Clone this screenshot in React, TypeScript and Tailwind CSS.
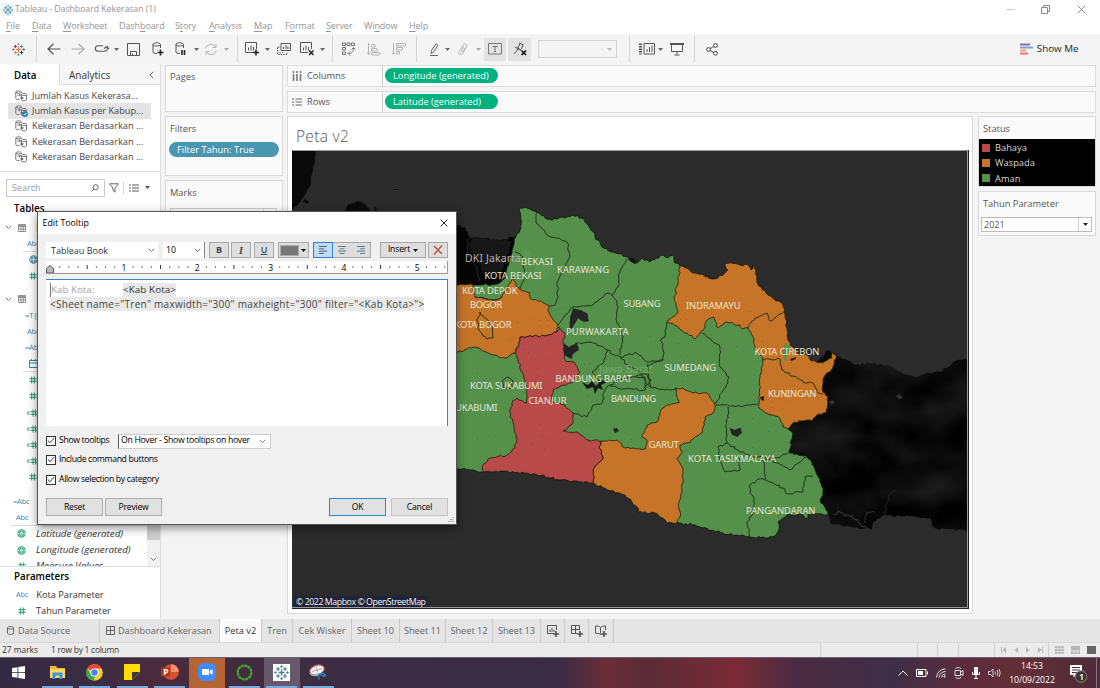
import React from "react";

type Pt = [number, number];

/* ---------- map geometry ---------- */

function parse(s: string): Pt[] {
  return s.split(" ").map((p) => p.split(",").map(Number) as Pt);
}

function noise(a: number, b: number, k: number) {
  const v = Math.sin(a * 12.9898 + b * 78.233 + k * 37.719) * 43758.5453;
  return v - Math.floor(v) - 0.5;
}

/* Adds small coastline-like irregularities; the result is the same in both directions. */
function rough(s: string, close = false, amp = 2.1) {
  const pts = parse(s);
  if (close) pts.push(pts[0]);
  const out: string[] = [`M${pts[0][0]} ${pts[0][1]}`];
  for (let i = 1; i < pts.length; i++) {
    const a = pts[i - 1];
    const b = pts[i];
    const flip = a[0] > b[0] || (a[0] === b[0] && a[1] > b[1]);
    const [p, q] = flip ? [b, a] : [a, b];
    const len = Math.hypot(q[0] - p[0], q[1] - p[1]);
    const n = Math.max(1, Math.round(len / 2.6));
    const seg: string[] = [];
    for (let k = 1; k < n; k++) {
      const t = k / n;
      const x = p[0] + (q[0] - p[0]) * t + noise(p[0], q[1], k) * amp;
      const y = p[1] + (q[1] - p[1]) * t + noise(q[0], p[1], k + 9) * amp;
      seg.push(`L${x.toFixed(1)} ${y.toFixed(1)}`);
    }
    if (flip) seg.reverse();
    out.push(...seg, `L${b[0]} ${b[1]}`);
  }
  return out.join("") + (close ? "Z" : "");
}

const PROVINCE =
  "450,285 474,285 475,285 497,284 506,277 509,262 512,252 515,238 520,230 521,220 519,210 525,207 537,212 547,219 557,219 572,215 582,218 590,228 602,247 613,252 628,257 632,262 637,263 642,258 650,262 663,255 668,258 673,255 675,263 680,266 695,273 712,279 718,278 728,270 725,263 740,265 748,265 751,270 753,265 756,272 757,282 768,295 783,304 785,310 787,330 788,340 797,353 807,355 812,361 822,363 832,358 832,352 836,355 833,367 824,377 823,392 828,397 826,413 817,415 812,421 802,421 793,423 788,429 793,433 789,453 807,456 812,462 816,472 820,482 823,492 820,500 828,512 829,516 817,514 808,514 807,519 800,514 787,515 778,522 779,530 775,536 768,538 750,537 723,533 703,528 695,525 678,523 667,523 663,518 655,513 638,512 637,507 625,495 603,488 593,483 560,480 535,474 500,471 482,472 450,467";

const BOGOR =
  "450,285 473,285 475,297 483,298 495,300 502,297 508,287 512,280 514,277 517,287 522,291 530,293 530,298 548,305 550,315 558,325 557,332 545,336 520,337 518,347 515,353 505,358 493,355 475,347 457,352 450,353";

const CIANJUR =
  "520,337 545,336 557,332 559,327 565,333 563,345 565,360 575,363 580,373 571,383 553,390 552,402 565,405 573,413 573,423 563,431 577,432 588,440 602,441 599,447 603,458 593,470 593,483 560,480 535,474 500,471 484,472 482,467 490,458 507,455 515,448 516,437 513,422 510,417 512,403 517,398 527,403 527,390 525,380 518,360 515,353 518,347";

const GARUT =
  "602,441 617,440 625,448 645,449 647,440 642,437 647,425 657,422 663,408 667,405 679,403 675,388 683,388 693,393 707,393 715,405 713,413 705,417 703,432 687,443 680,445 682,452 677,459 683,468 682,492 679,502 680,517 677,523 667,523 663,518 655,513 638,512 637,507 625,495 603,488 593,483 593,470 603,458 599,447";

const INDRAMAYU =
  "680,266 695,273 712,279 718,278 728,270 725,263 740,265 748,265 751,270 753,265 756,272 757,282 768,295 783,304 785,310 787,330 788,340 797,353 807,355 812,361 822,363 832,358 832,352 836,355 833,367 824,377 823,392 828,397 826,413 817,415 812,421 802,421 793,423 788,429 783,427 780,418 770,415 759,408 760,377 763,358 755,350 753,337 748,328 742,329 740,325 727,322 718,328 714,317 707,320 703,330 695,339 677,326 667,322 678,312 674,297 678,283";

const EAST_LAND =
  "828,350 837,356 847,360 855,365 872,363 890,366 903,374 915,377 926,373 940,372 953,362 969,358 969,531 945,529 938,529 933,527 930,518 905,516 885,515 873,522 872,530 850,527 830,523 828,512 780,500 780,400";

const BORDERS = [
  "537,212 536,223 547,235 567,242 570,257 565,268 557,282 558,297 555,305 549,306",
  "515,252 523,257 525,277 520,290",
  "627,259 620,272 618,287 612,295 617,303 617,323 623,337 620,355",
  "558,325 573,307 593,305 608,293 612,295",
  "575,343 593,343 607,350 620,357 637,353 647,362 663,360",
  "667,322 665,337 661,339 664,353 663,360 647,365 650,387 670,390 676,390",
  "702,333 720,347 720,367 729,377 728,383 718,400 716,404",
  "716,405 740,406 758,404",
  "728,407 729,413 726,427 727,443 740,452 753,457 777,458 788,453",
  "727,443 718,447 720,460 725,472 740,470 740,458",
  "763,460 765,480 783,488 787,494 803,492 805,477 813,476",
  "765,459 778,463 790,470 797,464 807,457",
  "765,480 758,479 750,485 750,492 754,498 753,513 747,522 750,537",
  "762,359 780,359 782,370 797,378 807,383 813,383 818,393 823,394",
  "748,328 755,318 767,313 770,321 785,311",
  "573,413 587,417 593,405 602,403 605,390 610,385 617,380 630,378 645,377 645,390 623,389 610,386",
  "607,350 604,362 592,372 600,382",
  "620,357 629,366 640,372 650,387",
  "480,312 485,318 492,326 493,338 487,339 479,330 477,320 480,312",
  "502,381 508,377 513,381 510,389 503,388 502,381",
  "475,297 483,298 495,300 502,297",
  "636,376 646,374 651,380 644,388",
];

const LABELS: [string, number, number, number][] = [
  ["BEKASI", 521, 264.5, 32],
  ["KOTA BEKASI", 484.5, 279, 57],
  ["KARAWANG", 557, 272.5, 52],
  ["KOTA DEPOK", 462, 294, 55.5],
  ["BOGOR", 470, 308, 32],
  ["KOTA BOGOR", 454.5, 328, 57],
  ["SUBANG", 623.5, 307, 37],
  ["PURWAKARTA", 566, 334.5, 62.5],
  ["BANDUNG BARAT", 555.5, 382, 76.5],
  ["KOTA SUKABUMI", 470, 389, 72.5],
  ["INDRAMAYU", 686, 309, 54.5],
  ["KOTA CIREBON", 754.5, 354.5, 65],
  ["SUMEDANG", 664.5, 370.5, 51.5],
  ["KUNINGAN", 768, 397, 48.5],
  ["CIANJUR", 528.5, 403.5, 38],
  ["SUKABUMI", 450, 411, 47.5],
  ["BANDUNG", 611, 402, 45],
  ["GARUT", 648.5, 448, 30.5],
  ["KOTA TASIKMALAYA", 688, 462, 88],
  ["PANGANDARAN", 746, 514, 69.5],
];

const GREEN = "#56914b";
const ORANGE = "#c67427";
const RED = "#b94a4a";

function MapView() {
  return (
    <svg viewBox="292 150 677 459" className="block h-[459px] w-[677px]">
      <defs>
        <filter id="terrain" x="0" y="0" width="100%" height="100%" colorInterpolationFilters="sRGB">
          <feTurbulence type="fractalNoise" baseFrequency="0.02 0.026" numOctaves="3" seed="11" />
          <feColorMatrix values="0.17 0 0 0 -0.042 0.17 0 0 0 -0.042 0.17 0 0 0 -0.042 0 0 0 0 1" />
          <feComposite in2="SourceAlpha" operator="in" />
        </filter>
      </defs>
      <rect x="292" y="150" width="677" height="459" fill="#2b2b2b" />
      <path d={rough("288,148 316,148 314,165 311,182 304,196 297,206 288,212", true)} fill="#090909" />
      <path d={rough("345,211 349,204 357,201 366,205 370,212 368,222 345,222", true)} fill="#0b0b0b" />
      <path d={rough("374,206 377,209 375,212", true)} fill="#080808" />
      <path d={rough("302,202 306,197 309,203", true)} fill="#0b0b0b" />
      <path d="M394 189.500h4" stroke="#0a0a0a" />
      <path d={rough("450,222 466,228 468,236 486,238 497,241 515,237 516,290 450,290", true)} fill="#050505" />
      <path d={rough("473,237 480,238 512,241 505,262 500,275 483,274 478,258 468,248", true)} fill="#171717" />
      <path d={rough("477,236 467,240 468,256 476,266 480,281")} fill="none" stroke="#343434" strokeWidth="0.8" />
      <path d={rough(EAST_LAND, true)} fill="#050505" filter="url(#terrain)" />
      <path d={rough("896,397 900,394 903,397 899,399", true)} fill="#303030" />
      <path d={rough("829,401 833,400 835,403 831,405", true)} fill="#303030" />
      <path d={rough("833,515 838,511 845,516 852,515 860,524 871,530")} fill="none" stroke="#333" strokeWidth="1.2" />
      <path d={rough("865,523 867,512 875,512")} fill="none" stroke="#2d2d2d" />
      <path d={rough("884,514 887,503 890,494 896,490")} fill="none" stroke="#222" />

      <path d={rough(PROVINCE, true)} fill={GREEN} stroke="#101a10" strokeWidth="0.9" />
      <g stroke="#231a0c" strokeWidth="0.8">
        <path d={rough(BOGOR, true)} fill={ORANGE} />
        <path d={rough(GARUT, true)} fill={ORANGE} />
        <path d={rough(INDRAMAYU, true)} fill={ORANGE} />
        <path d={rough(CIANJUR, true)} fill={RED} />
      </g>
      <circle cx="543" cy="270" r="9" fill="#5f9955" opacity="0.6" />
      <circle cx="526" cy="254" r="5" fill="#5f9955" opacity="0.8" />
      <path d="M785 342l3 3 4 4-3 2-2 6-3 4-1-8z" fill={GREEN} />
      <g fill="none" stroke="#182a14" strokeWidth="0.9">
        {BORDERS.map((b) => (
          <path key={b} d={rough(b)} />
        ))}
      </g>
      <g fill="#242424">
        <path d={rough("570,317 573,308 580,310 587,313 589,321 584,322 578,318 573,327 570,330", true, 1)} />
        <path d={rough("564,343 569,347 577,343 579,350 573,354 572,359 564,355", true, 1)} />
        <path d={rough("730,428 735,430 741,428 742,433 737,437 732,435", true, 1)} />
        <path d="M760 397l4-1v5l-3-1zM613 429l4-1 2 3-4 2zM790 359l6-2v2l-5 2z" />
      </g>
      <path d="M582 382l6 3 4-4 4 5 5-6 6 2-6 3 2 5-5-2-3 6-2-7-6 2z" fill="#141b12" />
      <path d="M629 258l4 5 4-1-4-4z" fill="#111" />
      <g fill="#24331f" opacity="0.7">
        {Array.from({ length: 70 }, (_, i) => (
          <rect
            key={i}
            x={(470 + (noise(i, 3, 1) + 0.5) * 330).toFixed(0)}
            y={(300 + (noise(i, 5, 2) + 0.5) * 155).toFixed(0)}
            width="0.7"
            height="0.7"
          />
        ))}
      </g>
      <text x="599" y="372.500" textLength="54" className="font-['Noto_Sans'] text-[11px]" fill="#77a86b">
        Jawa Barat
      </text>
      <text x="465" y="262" textLength="56" className="font-['Noto_Sans'] text-[10.5px]" fill="#b4b4b4">
        DKI Jakarta
      </text>
      <g fill="#e6e4d4" className="font-['Noto_Sans'] text-[9.4px]">
        {LABELS.map(([t, x, y, w]) => (
          <text key={t} x={x} y={y} textLength={w}>
            {t}
          </text>
        ))}
      </g>
      <rect x="294" y="596" width="134" height="12" fill="#20243a" />
      <text x="296" y="605" textLength="130" className="font-['Open_Sans'] text-[8.8px]" fill="#f2f2f2">
        © 2022 Mapbox © OpenStreetMap
      </text>
      <path d="M292 607.500H967.500V150.500H292" fill="none" stroke="#9a9a9a" />
      <path d="M292 608.500H968.500V150" fill="none" stroke="#222" />
    </svg>
  );
}

/* ---------- icons ---------- */

function Ico({
  w = 14,
  h = 14,
  d,
  color = "#555",
  sw = 1,
  children,
}: {
  w?: number;
  h?: number;
  d?: string;
  color?: string;
  sw?: number;
  children?: React.ReactNode;
}) {
  return (
    <svg width={w} height={h} viewBox={`0 0 ${w} ${h}`} fill="none" stroke={color} strokeWidth={sw} className="shrink-0">
      {d && <path d={d} />}
      {children}
    </svg>
  );
}

const Caret = ({ color = "#666" }: { color?: string }) => (
  <svg width="5" height="3" viewBox="0 0 5 3" className="shrink-0" fill={color}>
    <path d="M0 0h5L2.500 3z" />
  </svg>
);

const Chevron = () => <Ico w={7} h={5} d="M.8.8 3.500 3.500 6.200.8" color="#777" />;

function TableauLogo({ size = 13, mono }: { size?: number; mono?: string }) {
  const c = (x: string) => mono ?? x;
  return (
    <svg width={size} height={size} viewBox="0 0 26 26" fill="none" strokeWidth="2">
      <path d="M13 8v10M8 13h10" stroke={c("#e8762d")} strokeWidth="2.400" />
      <path d="M7 3.500v7M3.500 7h7" stroke={c("#c72035")} />
      <path d="M19 3.500v7M15.500 7h7" stroke={c("#5b879b")} />
      <path d="M7 15.500v7M3.500 19h7" stroke={c("#eb912c")} />
      <path d="M19 15.500v7M15.500 19h7" stroke={c("#1f457e")} />
      <path d="M13 0v5M10.500 2.500h5" stroke={c("#7099a6")} strokeWidth="1.500" />
      <path d="M13 21v5M10.500 23.500h5" stroke={c("#59879b")} strokeWidth="1.500" />
      <path d="M2.500 10.500v5M0 13h5" stroke={c("#7b5a7d")} strokeWidth="1.500" />
      <path d="M23.500 10.500v5M21 13h5" stroke={c("#1f457e")} strokeWidth="1.500" />
    </svg>
  );
}

const DbPair = ({ badge }: { badge?: boolean }) => (
  <Ico w={13} h={12} color="#666" sw={0.9} d="M4.500 9.500H2.500C1 9.500.8 8.500.8 8V2C.8.500 6.500.500 6.500 2v1M.8 2.300c1 1 4.700 1 5.700 0M2.500 5h3M4 3.800 5.500 5 4 6.200M6.500 4.500C6.500 3 11.500 3 11.500 4.500v5.300c0 1.500-5 1.500-5 0zM6.500 4.800c1 1 4 1 5 0M5 8h3M6.500 6.800 8.300 8 6.500 9.200">
    {badge && (
      <>
        <circle cx="10" cy="9" r="3" fill="#2f83ab" stroke="none" />
        <path d="M8.700 9l1 1 1.700-2" stroke="#fff" />
      </>
    )}
  </Ico>
);

const Globe = ({ color }: { color: string }) => (
  <Ico w={9} h={9} color={color} sw={0.9}>
    <circle cx="4.500" cy="4.500" r="3.800" />
    <ellipse cx="4.500" cy="4.500" rx="1.700" ry="3.800" />
    <path d="M1 3h7M1 6h7" />
  </Ico>
);

const Hash = ({ eq }: { eq?: boolean }) => (
  <Ico w={eq ? 11 : 8} h={8} color="#2f9c74" d={eq ? "M6 .5v7M8.500 .5v7M3.500 2.700h7.500M3.500 5.300h7.500M0 3h2.500M0 5h2.500" : "M2.700 .5v7M5.300 .5v7M.3 2.700h7.400M.3 5.300h7.400"} />
);

const TableIco = () => <Ico w={8} h={8} color="#777" d="M.5 .5h7v7h-7zM.5 2.500h7M.5 5h7M3 2.500v5M5.300 2.500v5M.5 1.500h7" sw={0.8} />;

const Abc = ({ eq }: { eq?: boolean }) => (
  <span className="font-['Open_Sans'] text-[7.5px] font-medium tracking-[-0.2px] text-[#3a84a0]">{eq ? "=Abc" : "Abc"}</span>
);

/* ---------- window chrome ---------- */

const MENU: [string, string, string, string][] = [
  ["", "F", "ile", "w-[26px]"],
  ["", "D", "ata", "w-[31px]"],
  ["", "W", "orksheet", "w-[56px]"],
  ["Dash", "b", "oard", "w-[56px]"],
  ["S", "t", "ory", "w-[34px]"],
  ["", "A", "nalysis", "w-[45px]"],
  ["", "M", "ap", "w-[31px]"],
  ["F", "o", "rmat", "w-[41px]"],
  ["", "S", "erver", "w-[38px]"],
  ["Wi", "n", "dow", "w-[45px]"],
  ["", "H", "elp", "w-[30px]"],
];

function Header() {
  return (
    <header className="h-[34px] shrink-0 bg-white font-['Open_Sans'] text-[#949494]">
      <div className="flex h-[18px] items-center pl-[1px]">
        <div className="mt-px flex size-[13px] items-center justify-center bg-[#e9f3f8]">
          <TableauLogo size={10} mono="#3b87a8" />
        </div>
        <span className="ml-[1px] mt-[2px] text-[8.8px] tracking-[-0.07px]">Tableau - Dashboard Kekerasan (1)</span>
        <div className="ml-auto flex items-center pr-[14px]">
          <Ico w={9} h={9} d="M0 4.500h9" color="#ccc" />
          <span className="ml-[26px] flex"><Ico w={9} h={9} d="M.5 2.500h6v6h-6zM2.500 2.500v-2h6v6h-2" color="#8a8a8a" /></span>
          <span className="ml-[27px] flex"><Ico w={9} h={9} d="M.7.7l7.600 7.600M8.300.7.7 8.300" color="#8a8a8a" /></span>
        </div>
      </div>
      <nav className="flex h-4 items-center pl-[6px] text-[9px] tracking-[-0.1px]">
        {MENU.map(([a, u, b, w]) => (
          <span key={a + u + b} className={`${w} shrink-0 whitespace-nowrap`}>
            {a}
            <span className="underline underline-offset-2">{u}</span>
            {b}
          </span>
        ))}
      </nav>
    </header>
  );
}

const Cell = ({ c, children }: { c: string; children?: React.ReactNode }) => (
  <div className={`flex h-full shrink-0 items-center justify-center ${c}`}>{children}</div>
);
const Sep = ({ c = "" }: { c?: string }) => <div className={`h-[26px] w-px shrink-0 bg-[#d4d4d4] ${c}`} />;

function Toolbar() {
  return (
    <div className="flex h-[30px] shrink-0 items-center bg-[#f4f4f4]">
      <Cell c="w-[36px]"><TableauLogo size={13} /></Cell>
      <Sep />
      <Cell c="ml-[4.5px] w-6"><Ico w={14} h={12} d="M13.500 6H1M6.500 .8 1 6l5.500 5.200" sw={1.2} color="#555" /></Cell>
      <Cell c="w-6"><Ico w={14} h={12} d="M.5 6H13M7.500 .8 13 6l-5.500 5.200" sw={1.1} color="#a5a5a5" /></Cell>
      <Cell c="w-6"><Ico w={15} h={10} d="M9 1.700H4.200a2.800 2.800 0 0 0 0 5.600h6.300c2.500 0 3.200-2 2.600-4.600M10 4.500l3.100-2.300 1.600 3" sw={1.1} /></Cell>
      <Cell c="w-[6px]"><Caret /></Cell>
      <Cell c="w-[27px]"><Ico w={13} h={13} d="M.5 .5h12v12h-12zM3.500 12.500v-4h6v4M5.500 12.500v-2" /></Cell>
      <Cell c="w-[22px]"><Ico w={12} h={14} d="M5 11.500C2 11.500 1 11 1 10V2.500C1 .3 8.500 .3 8.500 2.500V6M1 2.500c0 2 7.500 2 7.500 0"><path d="M8.500 7.500v6M5.500 10.500h6" stroke="#222" strokeWidth="1.600" /></Ico></Cell>
      <Cell c="w-6"><Ico w={12} h={14} d="M5 11.500C2 11.500 1 11 1 10V2.500C1 .3 8.500 .3 8.500 2.500V6M1 2.500c0 2 7.500 2 7.500 0"><path d="M7 8v5M9.500 8v5" stroke="#222" strokeWidth="1.600" /></Ico></Cell>
      <Cell c="w-[7px]"><Caret /></Cell>
      <Cell c="w-[22px]"><Ico w={14} h={13} d="M1.700 5.200a5.400 5.400 0 0 1 10-1M12.300 7.800a5.400 5.400 0 0 1-10 1M12 1v3.500H8.800M2 12V8.500h3.200" color="#b4b4b4" /></Cell>
      <Cell c="w-[10px]"><Caret color="#aaa" /></Cell>
      <Sep c="ml-[5px]" />
      <Cell c="ml-[2px] w-6"><Ico w={14} h={14} d="M8 10.500H.5V.5h11V7M3.500 8.500v-3M6 8.500v-5M8.500 8.500V5"><path d="M11 7.500v6M8 10.500h6" stroke="#222" strokeWidth="1.600" /></Ico></Cell>
      <Cell c="w-2"><Caret /></Cell>
      <Cell c="w-[25px]"><Ico w={14} h={12} d="M4 .5h9.500v7H4zM6.500 6V4M9 6V2M11 6V3.500"><path d="M2.500 4H.5v7.500h9.500v-2M3 9v2M5.500 9v1" strokeDasharray="1.500 1" /></Ico></Cell>
      <Cell c="w-[21px]"><Ico w={14} h={14} d="M8 10.500H.5V.5h11V7M3.500 8.500v-3M6 8.500v-5M8.500 8.500V5"><path d="M9 8.500l4.500 4.500M13.500 8.500 9 13" stroke="#222" strokeWidth="1.500" /></Ico></Cell>
      <Cell c="w-[10px]"><Caret /></Cell>
      <Sep c="ml-[4.5px]" />
      <Cell c="w-8"><Ico w={14} h={14} d="M.5 1h3v2.500h-3zM5 1h3v2.500H5zM9.500 1h3v2.500h-3zM.5 5.500h3V8h-3zM.5 10h3v2.500h-3zM11.500 6c0 4-2 5.500-5 5.500M9.500 7.500l2-2 2 2M8 9.500l-2 2 2 2" sw={0.8} /></Cell>
      <Cell c="w-[18px]"><Ico w={14} h={13} d="M1.500 0v11M0 9.500l1.500 2L3 9.500M4.500 1.500H8V4H4.500zM4.500 5.500H10V8H4.500zM4.500 9.500h8v2.500h-8z" color="#b4b4b4" /></Cell>
      <Cell c="w-8"><Ico w={14} h={13} d="M1.500 0v11M0 9.500l1.500 2L3 9.500M4.500 .5h9V3h-9zM4.500 4.500h6V7h-6zM4.500 8.500h3V11h-3z" color="#b4b4b4" /></Cell>
      <Sep c="ml-px" />
      <Cell c="ml-[7px] w-5"><Ico w={11} h={13} d="M1 12.500h8M2 10.500 2.500 7.500 7 .8l2 1.500L4.500 9z" color="#666" /></Cell>
      <Cell c="w-[6px]"><Caret /></Cell>
      <Cell c="w-[25px]"><Ico w={11} h={13} d="M2 8.500 6.500 1.500c1-1.300 4-.1 3 2.200L5.500 10.700c-1.500 2-4.500.5-4-1.700M3.500 9.500l3.500-6M5.500 9.500l3-5" color="#b4b4b4" /></Cell>
      <Cell c="w-[7px]"><Caret color="#aaa" /></Cell>
      <div className="ml-[2px] flex h-[23px] w-[22px] items-center justify-center bg-[#e3e3e3]"><Ico w={14} h={12} d="M.5 .5h13v10.500H.5zM4.500 4V3.500h5V4M7 3.500V8.500M6 8.500h2" color="#777" /></div>
      <div className="ml-[2px] flex h-[23px] w-[23px] items-center justify-center bg-[#e3e3e3]"><Ico w={14} h={14} d="M6 1 10.500 3M7 1.500 4.500 6.500M9.800 3 8.500 7M2 5l6 3.500M5 7 1 12M4 5.500 8 8" color="#555"><path d="M8.500 8.500l4.500 4.500M13 8.500 8.500 13" stroke="#111" strokeWidth="1.700" /></Ico></div>
      <div className="ml-[7px] flex h-[18px] w-[79px] items-center justify-end border border-[#d2d2d2] pr-[4px]"><Caret color="#bbb" /></div>
      <Sep c="ml-[12px]" />
      <Cell c="ml-[7px] w-[19px]"><Ico w={16} h={12} d="M5 .5h10.500v10.500H5zM8 9V6M10.500 9V4M13 9V2.500"><path d="M1.500 .5v11" strokeWidth="3" strokeDasharray="1.500 1" /></Ico></Cell>
      <Cell c="w-2"><Caret /></Cell>
      <Cell c="w-[26px]"><Ico w={14} h={13} d="M1.500 1.500v7h11v-7M7 8.500v3M4.500 12h5"><path d="M0 1h14" strokeWidth="2" /></Ico></Cell>
      <Sep c="ml-[4px]" />
      <Cell c="w-[34px]"><Ico w={13} h={13} color="#444"><circle cx="2.500" cy="6.500" r="1.900" /><circle cx="9.500" cy="2.500" r="1.900" /><circle cx="9.500" cy="10.300" r="1.900" /><path d="M4.200 5.500l3.600-2M4.200 7.500l3.600 2" /></Ico></Cell>
      <div className="ml-auto flex items-center pr-[21.5px]">
        <svg width="13" height="12" className="shrink-0">
          <path d="M0 1.500h10" stroke="#86709a" strokeWidth="2" />
          <path d="M0 4.500h13" stroke="#7aa3d0" strokeWidth="2" />
          <path d="M0 7.500h6" stroke="#f0a47c" strokeWidth="2" />
          <path d="M0 10.500h8" stroke="#f0707f" strokeWidth="2" />
        </svg>
        <span className="ml-[4px] mt-px font-['Open_Sans'] text-[9.8px] text-[#222]">Show Me</span>
      </div>
    </div>
  );
}

/* ---------- left pane ---------- */

const SOURCES: [string, boolean][] = [
  ["Jumlah Kasus Kekerasa...", false],
  ["Jumlah Kasus per Kabup...", true],
  ["Kekerasan Berdasarkan ...", false],
  ["Kekerasan Berdasarkan ...", false],
  ["Kekerasan Berdasarkan ...", false],
];

const Row = ({ c = "pl-[29px]", children }: { c?: string; children?: React.ReactNode }) => (
  <div className={`flex h-[16.2px] shrink-0 items-center ${c}`}>{children}</div>
);

function DataPane() {
  return (
    <aside className="flex w-[161px] shrink-0 flex-col overflow-hidden border-r border-[#dedede] bg-white font-['Open_Sans'] text-[#333]">
      <div className="flex h-[21px] shrink-0">
        <div className="w-[59px] pl-[14px] pt-[4px] text-[9.800px] font-semibold leading-[15px] text-black">Data</div>
        <div className="flex flex-1 items-center justify-between border-b border-l border-[#dcdcdc] bg-[#f7f7f7] pl-[9px] pr-[6px] pt-[2px] text-[10px]">
          Analytics
          <Ico w={5} h={8} d="M4.200.8 1 4l3.200 3.200" color="#666" />
        </div>
      </div>
      <div className="mt-[3px] flex shrink-0 flex-col">
        {SOURCES.map(([t, on], i) => (
          <div key={i} className={`ml-2 flex h-[15.3px] w-[143px] items-center pl-[7px] text-[9.2px] text-[#444] ${on ? "bg-[#e4e4e4]" : ""}`}>
            <DbPair badge={on} />
            <span className="ml-[4px] whitespace-nowrap">{t}</span>
          </div>
        ))}
      </div>
      <div className="mt-[7px] h-px shrink-0 bg-[#dcdcdc]" />
      <div className="mt-[6px] flex h-[19px] shrink-0 items-center pl-[6px]">
        <div className="flex h-[18px] w-[99px] items-center justify-between border border-[#c8c8c8] px-[5px] text-[9px] text-[#999]">
          Search
          <Ico w={8} h={8} color="#666"><circle cx="4.700" cy="3.200" r="2.500" /><path d="M3 5 .5 7.500" /></Ico>
        </div>
        <span className="ml-[4px] flex"><Ico w={10} h={10} d="M.5 .8h9L6 5v4.200L4 7.500V5z" color="#666" /></span>
        <span className="ml-[4px] h-[12px] w-px bg-[#ddd]" />
        <span className="ml-[5px] flex"><Ico w={10} h={8} d="M0 1h2M0 4h2M0 7h2M3 1h7M3 4h7M3 7h7" color="#555" /></span>
        <span className="ml-[6px] flex"><Caret color="#555" /></span>
      </div>
      <div className="mt-[5px] h-[17px] shrink-0 pl-[14px] text-[9.8px] font-semibold leading-[14px] text-black">Tables</div>
      <div className="flex h-[347px] shrink-0 overflow-hidden">
        <div className="flex flex-1 flex-col">
          <Row c="pl-[5px]"><Chevron /><span className="ml-[6px] flex"><TableIco /></span><span className="ml-[10px] h-[9px] w-4 bg-[#fbe9a6]" /></Row>
          <Row c="border-b border-[#ddd] ml-[23px] pl-[4px]"><Abc /></Row>
          <Row><Globe color="#3a84a0" /></Row>
          <Row><Hash /></Row>
          <Row c="mt-[7px] pl-[5px]"><Chevron /><span className="ml-[6px] flex"><TableIco /></span></Row>
          <Row c="pl-[25px]"><span className="text-[7.500px] font-medium text-[#3a84a0]">=T|F</span></Row>
          <Row c="pl-[27px]"><Abc /></Row>
          <Row c="pl-[25px]"><Abc eq /></Row>
          <Row c="border-b border-[#ddd] ml-[23px] pl-[6px]"><Ico w={9} h={9} d="M.5 1.500h8v7h-8zM.5 4h8M2.500 0v2M6.500 0v2" color="#3a84a0" /></Row>
          <Row c="pl-[29px]"><Hash /></Row>
          <Row c="pl-[29px]"><Hash /></Row>
          <Row c="pl-[27px]"><Hash eq /></Row>
          <Row c="pl-[27px]"><Hash eq /></Row>
          <Row c="pl-[27px]"><Hash eq /></Row>
          <Row c="pl-[27px]"><Hash eq /></Row>
          <Row c="pl-[29px]"><Hash /></Row>
          <Row c="mt-[8px] pl-[13px]"><Abc eq /></Row>
          <Row c="border-b border-[#ddd] ml-[11px] pl-[5px]"><Abc /></Row>
          <Row c="pl-[17px]"><Globe color="#2f9c74" /><span className="ml-[10px] text-[9.800px] italic">Latitude (generated)</span></Row>
          <Row c="pl-[17px]"><Globe color="#2f9c74" /><span className="ml-[10px] text-[9.800px] italic">Longitude (generated)</span></Row>
          <Row c="pl-[18px]"><Hash /><span className="ml-[10px] text-[9.700px] italic">Measure Values</span></Row>
        </div>
        <div className="flex w-[13px] flex-col items-center justify-end bg-[#f0f0f0]">
          <div className="w-full flex-1 bg-[#cdcdcd]" />
          <div className="flex h-[26px] items-end pb-[4px]"><Chevron /></div>
        </div>
      </div>
      <div className="h-px shrink-0 bg-[#dcdcdc]" />
      <div className="mt-[2px] h-[17px] shrink-0 pl-[14px] text-[9.800px] font-semibold leading-[15px] text-black">Parameters</div>
      <Row c="pl-[16px]"><Abc /><span className="ml-[8px] text-[9.200px]">Kota Parameter</span></Row>
      <Row c="pl-[18px]"><Hash /><span className="ml-[10px] text-[9.200px]">Tahun Parameter</span></Row>
    </aside>
  );
}

/* ---------- worksheet ---------- */

function Worksheet() {
  return (
    <div className="flex min-w-0 flex-1 bg-[#f4f4f4] pl-[4px] pr-[4px] pt-[1px] font-['Open_Sans'] text-[9.300px] text-[#555]">
      <div className="flex w-[118px] shrink-0 flex-col gap-[4px]">
        <section className="h-[47px] border border-[#d9d9d9] bg-[#fafafa] pl-[4px] pt-[3px] leading-[15px]">Pages</section>
        <section className="h-[60px] border border-[#d9d9d9] bg-[#fafafa] pl-[3px] pt-[5px] leading-[14px]">
          <div className="pl-px">Filters</div>
          <div className="mt-[6px] flex h-[15px] w-[110px] items-center rounded-full bg-[#4996b2] pl-[8px] text-[9.400px] font-medium text-white">Filter Tahun: True</div>
        </section>
        <section className="h-[200px] border border-[#d9d9d9] bg-[#fafafa] pl-[4px] pt-[5px] leading-[14px]">
          Marks
          <div className="mt-[8px] flex h-4 w-[107px] justify-end border border-[#ccc]"><div className="w-[13px] border-l border-[#ccc]" /></div>
        </section>
      </div>
      <div className="ml-[4px] flex min-w-0 flex-1 flex-col">
        <div className="flex flex-col gap-[4px]">
          {["Columns", "Rows"].map((n, i) => (
            <div key={n} className="flex h-[22px] border border-[#dcdcdc] bg-[#fafafa]">
              <div className="flex w-[95px] items-center border-r border-[#ccc] pl-[4px]">
                {i === 0 ? <Ico w={10} h={10} d="M1.500 0v2M1.500 3v7M5 0v2M5 3v7M8.500 0v2M8.500 3v7" color="#777" sw={1.6} /> : <Ico w={10} h={8} d="M0 1h2M0 4h2M0 7h2M3.500 1h6.500M3.500 4h6.500M3.500 7h6.500" color="#666" />}
                <span className="ml-[5px] text-[9.300px]">{n}</span>
              </div>
              <div className="ml-[2px] mt-[2px] flex h-[15px] w-[113px] items-center rounded-full bg-[#00b180] pl-[8px] text-[9.300px] font-medium text-white">
                {i === 0 ? "Longitude (generated)" : "Latitude (generated)"}
              </div>
            </div>
          ))}
        </div>
        <div className="mt-[3px] flex justify-between">
          <div className="h-[498px] w-[686px] border border-[#d9d9d9] bg-white pl-[4px]">
            <div className="h-[33px] pl-[4px] pt-[8px] text-[15.500px] font-light leading-[22px] tracking-[0.300px] text-[#555]">Peta v2</div>
            <MapView />
          </div>
          <div className="flex w-[118px] flex-col gap-[4px]">
            <section className="h-[71px] border border-[#d9d9d9] bg-[#fafafa]">
              <div className="h-[22px] pl-[4px] pt-[5px] leading-[14px]">Status</div>
              <div className="h-[47px] bg-black pt-px text-[#d8d8d8]">
                {[["Bahaya", "bg-[#b94a4a]"], ["Waspada", "bg-[#c67427]"], ["Aman", "bg-[#56914b]"]].map(([t, c]) => (
                  <div key={t} className="flex h-[15.3px] items-center pl-[3px]">
                    <span className={`size-[8px] ${c}`} />
                    <span className="ml-[5px] mt-px">{t}</span>
                  </div>
                ))}
              </div>
            </section>
            <section className="h-[45px] border border-[#d9d9d9] bg-[#fafafa] px-[2px]">
              <div className="pl-[2px] pt-[5px] leading-[14px]">Tahun Parameter</div>
              <div className="mt-[6px] flex h-[15px] w-[111px] items-center justify-between border border-[#bbb] bg-white pl-[2px] text-[9px]">
                2021
                <span className="flex h-full w-[13px] items-center justify-center border-l border-[#ccc]"><Caret color="#222" /></span>
              </div>
            </section>
          </div>
        </div>
      </div>
    </div>
  );
}

/* ---------- dialog ---------- */

const Check = ({ children }: { children: React.ReactNode }) => (
  <div className="flex items-center">
    <span className="flex size-[10px] items-center justify-center border border-[#333] bg-white"><Ico w={8} h={7} d="M.8 3.500 3 5.700 7.300.9" color="#333" /></span>
    <span className="ml-[3px] whitespace-nowrap text-[8.700px] tracking-[-0.350px]">{children}</span>
  </div>
);

const NUMS = ["1", "2", "3", "4", "5"];

function Dialog() {
  return (
    <div className="absolute left-[37px] top-[211px] flex h-[314px] w-[419.5px] flex-col border border-[#555] bg-[#f0f0f0] font-['Open_Sans'] text-[9px] text-black shadow-[0_3px_9px_rgba(0,0,0,0.45)]">
      <div className="flex h-[22px] shrink-0 items-center justify-between bg-white pl-[4.5px] pr-[8px]">
        <span className="mt-px text-[8.800px]">Edit Tooltip</span>
        <Ico w={8} h={8} d="M.6.6l6.800 6.800M7.400.6.6 7.400" color="#222" />
      </div>
      <div className="mt-[8px] flex h-[16px] shrink-0 items-center pl-[8px]">
        <div className="flex h-full w-[112px] items-center justify-between bg-white pl-[5px] pr-[3px] pt-px text-[#333]">Tableau Book<Chevron /></div>
        <div className="ml-[5px] flex h-full w-[42px] items-center justify-between border-r border-[#888] bg-white px-[3px] pt-px text-[8.700px]">10<Chevron /></div>
        <div className="ml-[4px] flex h-full w-[20px] items-center justify-center border border-[#a8a8a8] bg-[#dedede] font-bold text-[#3d4654]">B</div>
        <div className="ml-[2px] flex h-full w-[20px] items-center justify-center border border-[#a8a8a8] bg-[#dedede] font-['Liberation_Serif'] text-[10px] font-bold italic text-[#3d4654]">I</div>
        <div className="ml-[3px] flex h-full w-[20px] items-center justify-center border border-[#a8a8a8] bg-[#dedede] font-semibold text-[#3d4654] underline">U</div>
        <div className="ml-[4px] flex h-full w-[31px] items-center justify-between border border-[#a8a8a8] bg-[#dedede] pl-[1px] pr-[2px]"><span className="h-[11px] w-[19px] border border-[#aaa] bg-[#777]" /><Caret color="#111" /></div>
        <div className="ml-[4px] flex h-full w-[58px] border border-[#a8a8a8] bg-[#dedede]">
          <span className="-m-px flex w-[20px] items-center justify-center border border-[#2a83d6] bg-[#bfdcf5]"><Ico w={8} h={8} d="M0 .5h8M0 2.800h5M0 5.100h8M0 7.400h5" color="#567" /></span>
          <span className="flex flex-1 items-center justify-center"><Ico w={8} h={8} d="M0 .5h8M1.500 2.800h5M0 5.100h8M1.500 7.400h5" color="#678" /></span>
          <span className="flex flex-1 items-center justify-center"><Ico w={8} h={8} d="M0 .5h8M3 2.800h5M0 5.100h8M3 7.400h5" color="#678" /></span>
        </div>
        <div className="ml-[9px] flex h-full w-[46px] items-center justify-center gap-[3px] border border-[#a8a8a8] bg-[#dedede] text-[8.700px] tracking-[-0.200px]">Insert<Caret color="#111" /></div>
        <div className="ml-[2px] flex h-full w-[20px] items-center justify-center border border-[#a8a8a8] bg-[#dedede]"><Ico w={10} h={10} d="M1 1l8 8M9 .5 1 9.500" color="#b8573f" sw={1.5} /></div>
      </div>
      <div className="ml-[8px] mt-[3px] flex h-[13px] w-[402px] shrink-0 border-b border-r border-[#999] bg-white">
        <svg width="401" height="12" className="block">
          {Array.from({ length: 44 }, (_, i) => (
            <path key={i} d={`M${4.5 + i * 9.17} ${i % 4 === 0 ? 4 : 5}v${i % 4 === 0 ? 4 : 2}`} stroke={i % 8 === 0 ? "#fff" : i % 4 === 0 ? "#333" : "#777"} />
          ))}
          {NUMS.map((n, i) => (
            <text key={n} x={78 + i * 73.3} y="9.500" textAnchor="middle" className="text-[8.5px]" fill="#000">
              {n}
            </text>
          ))}
          <path d="M.5 12V7.500L4 4.500l3.500 3V12z" fill="#bbb" stroke="#555" />
        </svg>
      </div>
      <div className="ml-[8px] mt-[5px] h-[147px] w-[402px] shrink-0 border-r border-t border-[#2f87cf] bg-white pl-[4px] pt-[3px] leading-[14px]">
        <div className="flex h-[14px] text-[9.800px]">
          <span className="w-[73px] border-l border-[#777] text-[#a3a3a3]">Kab Kota:</span>
          <span className="bg-[#e9e9e9] font-medium tracking-[0.100px] text-[#333]">&lt;Kab Kota&gt;</span>
        </div>
        <div className="flex h-[14px] text-[10px] text-[#444]">
          <span className="whitespace-nowrap bg-[#e9e9e9] tracking-[0.270px]">&lt;Sheet name="Tren" maxwidth="300" maxheight="300" filter="&lt;Kab Kota&gt;"&gt;</span>
        </div>
      </div>
      <div className="flex flex-1 flex-col pl-[8px]">
        <div className="mt-[7px] flex h-[16px] items-center">
          <div className="w-[72px]"><Check>Show tooltips</Check></div>
          <div className="flex h-[15px] w-[153px] items-center justify-between whitespace-nowrap border border-l-[#555] border-[#ccc] bg-white pl-[2px] pr-[4px] text-[8.700px] tracking-[-0.320px]">On Hover - Show tooltips on hover<Chevron /></div>
        </div>
        <div className="mt-[4px] h-[14px]"><Check>Include command buttons</Check></div>
        <div className="mt-[6px] h-[14px]"><Check>Allow selection by category</Check></div>
        <div className="mt-[11px] flex h-[18px] text-[8.600px] tracking-[-0.200px]">
          <button className="w-[57px] border border-[#adadad] bg-[#e1e1e1]">Reset</button>
          <button className="ml-[2px] w-[57px] border border-[#adadad] bg-[#e1e1e1]">Preview</button>
          <button className="ml-[167px] w-[57px] border border-[#2f87cf] bg-[#e1e1e1]">OK</button>
          <button className="ml-[5px] w-[57px] border border-[#c4c4c4] bg-[#e1e1e1]">Cancel</button>
        </div>
        <div className="flex justify-end pr-[2px]"><Ico w={6} h={6} d="M0 5.500h6M2 3.500h4M4 1.500h2" color="#bbb" /></div>
      </div>
    </div>
  );
}

/* ---------- bottom bars ---------- */

const SHEETS: [string, string][] = [
  ["Tren", "w-[31px]"],
  ["Cek Wisker", "w-[59px]"],
  ["Sheet 10", "w-[48px]"],
  ["Sheet 11", "w-[46px]"],
  ["Sheet 12", "w-[47px]"],
  ["Sheet 13", "w-[48px]"],
];

function SheetTabs() {
  const base = "flex h-full shrink-0 items-center justify-center whitespace-nowrap border-r border-[#c9c9c9]";
  return (
    <div className="flex h-[23px] shrink-0 bg-[#e5e5e5] font-['Open_Sans'] text-[9.200px] text-[#666]">
      <div className={`${base} w-[100px] !justify-start pl-[7px]`}><Ico w={7} h={9} d="M.5 1.800c0-1.700 6-1.700 6 0v5.400c0 1.700-6 1.700-6 0zM.5 2c0 1.300 6 1.300 6 0" color="#666" /><span className="ml-[4px] mt-px">Data Source</span></div>
      <div className={`${base} w-[120px] !justify-start pl-[6px]`}><Ico w={9} h={9} d="M.5 .5h8v8h-8zM4.500 .5v8M.5 4.500h8" color="#666" /><span className="ml-[3px] mt-px tracking-[-0.050px]">Dashboard Kekerasan</span></div>
      <div className={`${base} w-[42px] bg-[#fafafa] font-medium text-[#333]`}>Peta v2</div>
      {SHEETS.map(([t, w]) => (
        <div key={t} className={`${base} ${w} pt-px`}>{t}</div>
      ))}
      <div className={`${base} w-6`}><Ico w={12} h={12} d="M7 8.500H.5V.5h9V5M3 7V4.500M5 7V3M7 7V4.500"><path d="M9 6v6M6 9h6" strokeWidth="1.700" /></Ico></div>
      <div className={`${base} w-6`}><Ico w={12} h={12} d="M6 8.500H.5V.5h8V5M4.500 .5v8M.5 4.500h8"><path d="M9 6v6M6 9h6" strokeWidth="1.700" /></Ico></div>
      <div className={`${base} w-[25px]`}><Ico w={12} h={12} d="M6 9.500C4 8 2 8.500.5 8.500V1c2 0 3.500 0 5 1.500C7 1 8.500 1 10.500 1v4M5.500 2.500v6"><path d="M9 6v6M6 9h6" strokeWidth="1.700" /></Ico></div>
    </div>
  );
}

function StatusBar() {
  const b = "h-full border-l border-[#d0d0d0]";
  return (
    <div className="flex h-[15px] shrink-0 items-center border-t border-[#d9d9d9] bg-[#ebebeb] pl-[2px] font-['Open_Sans'] text-[8.400px] text-[#333]">
      <span>27 marks</span>
      <span className="ml-[13px] tracking-[-0.220px]">1 row by 1 column</span>
      <div className="ml-auto flex h-full">
        <div className={`${b} w-[97px]`} />
        <div className={`${b} w-[20px]`} />
        <div className={`${b} w-[21px]`} />
        <div className={`${b} w-[36px]`} />
        <div className={`${b} flex w-[54px] items-center justify-around pl-[3px] pr-[2px]`}>
          {[0, 1, 2, 3].map((i) => (
            <svg key={i} width="6" height="6" fill="#b5b5b5">
              {i < 2 ? <path d="M5 0v6L1.500 3z" /> : <path d="M1 0v6l3.500-3z" />}
              {i === 0 && <path d="M0 0h1v6H0z" />}
              {i === 3 && <path d="M5 0h1v6H5z" />}
            </svg>
          ))}
        </div>
        <div className={`${b} flex w-[52px] items-center gap-[7px] pl-[6px]`}>
          <svg width="9" height="8"><path d="M0 1.200h9M0 4h9M0 6.800h9" stroke="#b5b5b5" strokeWidth="2" strokeDasharray="2.600 .5" /></svg>
          <svg width="9" height="8"><path d="M0 0h9v4.500H0zM0 5.500h2.600v2.500H0zM3.200 5.500h2.600v2.500H3.200zM6.400 5.500H9v2.500H6.400z" fill="#b5b5b5" /></svg>
          <svg width="9" height="8"><path d="M0 0h9v8H0z" fill="#666" /></svg>
        </div>
      </div>
    </div>
  );
}

function TaskItem({ c = "", line = true, children }: { c?: string; line?: boolean; children: React.ReactNode }) {
  return (
    <div className={`flex h-full w-[37.5px] shrink-0 flex-col items-center ${c}`}>
      <div className="flex flex-1 items-center">{children}</div>
      <div className={`h-[2px] w-[31px] ${line ? "bg-[#76a9dc]" : ""}`} />
    </div>
  );
}

function Taskbar() {
  return (
    <div className="flex h-[31px] shrink-0 border-t border-[#6a6070] bg-[linear-gradient(90deg,#332b42_0%,#3c2c42_9%,#4b2b3c_14%,#3d2c42_26%,#372d45_48%,#3a2c44_51%,#6a2d38_55%,#5a2b38_59%,#7a2c36_67%,#4b2b40_72%,#3d2e46_81%,#5d2c3c_88%,#632f37_93%,#4c2b38_100%)]">
      <TaskItem c="!w-[38.5px]" line={false}><svg width="13" height="13" fill="#fff" className="-ml-[2px]"><path d="M0 2l5.500-.8V6H0zM6.300 1 13 0v6H6.300zM0 6.800h5.500v5L0 11zM6.300 6.800H13V13l-6.700-1z" /></svg></TaskItem>
      <TaskItem>
        <svg width="17" height="15"><path d="M1 1h6l1.500 2H16v10H1z" fill="#e9b93c" /><path d="M1 4h15v9H1z" fill="#fbd766" /><path d="M3.500 7.500h10V14h-3v-3.500h-4V14h-3z" fill="#3e94d6" /></svg>
      </TaskItem>
      <TaskItem>
        <svg width="17" height="17" viewBox="0 0 17 17"><circle cx="8.500" cy="8.500" r="8.300" fill="#fcc934" /><path d="M8.500 8.500 1.300 4.300A8.300 8.300 0 0 1 15.700 4.400H8.500z" fill="#ea4335" /><path d="M1.300 4.300 5 10.600 8.300 16.800A8.300 8.300 0 0 1 1.300 4.300z" fill="#34a853" /><path d="M5 10.600 8.500 12l-.2 4.800z" fill="#34a853" /><circle cx="8.500" cy="8.500" r="4.100" fill="#fff" /><circle cx="8.500" cy="8.500" r="3.200" fill="#4285f4" /></svg>
      </TaskItem>
      <TaskItem><svg width="16" height="16"><path d="M0 0h16v8l-8 8H0z" fill="#fddc0a" /><path d="M8 16V8h8z" fill="#3c3b36" /></svg></TaskItem>
      <TaskItem><svg width="19" height="16"><circle cx="11" cy="8" r="7.800" fill="#d35230" /><path d="M11 .2A7.800 7.800 0 0 1 18.800 8H11z" fill="#ff8f6b" /><path d="M1 3.500h9v9H1z" fill="#b93419" /><text x="3.200" y="11" fontSize="8.500" fontWeight="700" fill="#fff" className="font-['Open_Sans']">P</text></svg></TaskItem>
      <TaskItem c="!w-[36px] bg-[#b56533]" line={false}><svg width="18" height="18"><rect width="18" height="18" rx="5.500" fill="#3f8cf8" /><path d="M4 6h7v6H5.500Q4 12 4 10.500zM11.700 8 14.500 6.200v5.600L11.700 10z" fill="#fff" /></svg></TaskItem>
      <TaskItem c="!w-[39px]"><svg width="17" height="17"><circle cx="8.500" cy="8.500" r="6.800" fill="none" stroke="#3fa52c" strokeWidth="2.400" strokeDasharray="3 .5" /></svg></TaskItem>
      <TaskItem c="!w-[36px] bg-[#68586c]"><div className="flex size-[17px] items-center justify-center bg-white"><TableauLogo size={15} mono="#447f9c" /></div></TaskItem>
      <TaskItem><svg width="18" height="17"><ellipse cx="8" cy="6" rx="7.500" ry="4.800" fill="#f4f0f0" stroke="#b74a52" strokeWidth="1.200" transform="rotate(-18 8 6)" /><path d="M3 7.500l10-3M7 3l2 5.500" stroke="#aaa" /><path d="M1 9c2 3 6 3 9 1" stroke="#a9a9a9" strokeWidth="2" fill="none" /><path d="M11 10c-2 1-2 4-.5 5.500M11 10c3-1 5.500 0 5.500 1.500S13 12 11 10" stroke="#2a7fc0" strokeWidth="1.500" fill="none" /></svg></TaskItem>
      <div className="ml-auto flex h-full items-center text-white">
        <Ico w={10} h={6} d="M.5 5.500 5 1l4.500 4.500" color="#fff" />
        <span className="ml-[8px] flex"><Ico w={12} h={8} d="M.5 .5h9.500v7H.5zM11.500 2.500v3" color="#fff"><path d="M2 2h5v4H2z" fill="#fff" stroke="none" /></Ico></span>
        <span className="ml-[8px] flex"><Ico w={10} h={10} d="M.5 9.500A9 9 0 0 1 9.500.8M3 9.500a6.500 6.500 0 0 1 6.500-6M5.500 9.500a4 4 0 0 1 4-3.500" color="#ddd"><circle cx="8.500" cy="8.500" r="1" fill="#fff" stroke="none" /></Ico></span>
        <span className="ml-[8px] flex"><Ico w={10} h={12} d="M1 3.500h5.500v5H1zM6.500 5 9 3.500v5L6.500 7M1.500 1.500C3 .3 5.500.3 7 1.500M1.500 10.500C3 11.700 5.500 11.700 7 10.500" color="#ddd" /></span>
        <span className="ml-[8px] flex"><svg width="8" height="12"><rect x="2" y="0" width="4" height="7.500" rx="1" fill="#fff" /><path d="M.5 5v2.500h7V5M4 8v3.500M2 11.500h4" stroke="#fff" fill="none" /></svg></span>
        <span className="ml-[8px] flex"><Ico w={13} h={10} d="M.5 3.500h2L5 1v8L2.500 6.500h-2zM7 3.500q1 1.500 0 3M9 2q2 3 0 6M11 1q2.500 4 0 8" color="#ccc" /></span>
        <div className="ml-[7px] w-[48px] whitespace-nowrap text-center font-['Open_Sans'] text-[8.600px] leading-[14px]">14:53<br />10/09/2022</div>
        <div className="relative ml-[14px] mr-[7px] h-[20px] w-[19px]">
          <svg width="18" height="18" className="mt-[2px]"><path d="M0 0h12v10H6l-2.500 2.500V10H0z" fill="#fff" /><path d="M2 2.500h8M2 5h8M2 7.500h5" stroke="#4c2b38" /><circle cx="11" cy="11.500" r="5.800" fill="#3a3638" stroke="#999" strokeWidth=".8" /></svg>
          <span className="absolute left-[9px] top-[8px] text-[9px] font-semibold leading-[11px]">1</span>
        </div>
        <div className="mr-[3px] h-full w-px bg-[#8d7480]" />
      </div>
    </div>
  );
}

export default function App() {
  return (
    <div className="relative flex h-[688px] w-[1100px] flex-col overflow-hidden bg-[#f4f4f4]">
      <Header />
      <Toolbar />
      <main className="flex h-[555px] shrink-0 overflow-hidden">
        <DataPane />
        <Worksheet />
      </main>
      <SheetTabs />
      <StatusBar />
      <Taskbar />
      <Dialog />
    </div>
  );
}
